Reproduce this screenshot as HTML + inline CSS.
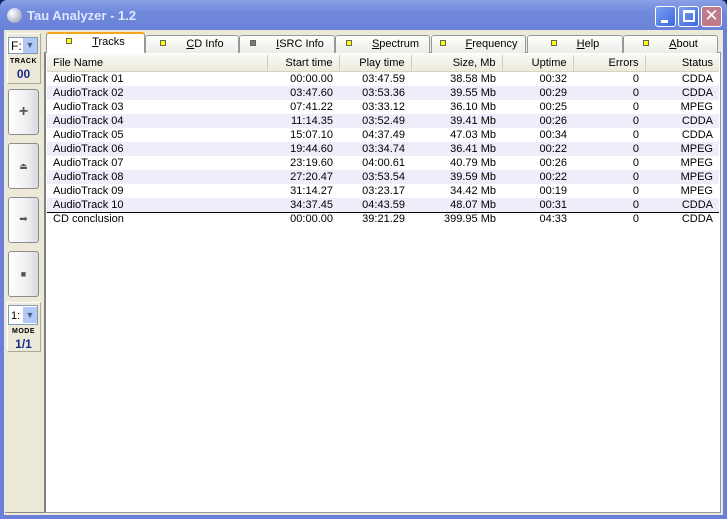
<!DOCTYPE html><html><head><style>
*{margin:0;padding:0;box-sizing:border-box}
body{width:727px;height:519px;overflow:hidden;font-family:Tahoma,"Liberation Sans",sans-serif;font-size:11px;background:#0a246a;position:relative}
.a{position:absolute}
#title{left:0;top:0;width:727px;height:30px;background:linear-gradient(#8aa0e6,#7089dc 40%,#6a82d8);border-radius:7px 7px 0 0}
#frame{left:0;top:28px;width:727px;height:491px;background:#6b7fd9}
#client{left:4px;top:30px;width:719px;height:485px;background:#ece9d8}
.wb{top:6px;width:21px;height:21px;border:1px solid #fff;border-radius:3px;background:linear-gradient(135deg,#7a9ef0,#3b6ae0)}
.tab{top:35px;height:18px;border:1px solid #919b9c;border-bottom:none;border-radius:3px 3px 0 0;background:linear-gradient(#fff,#ecebe5);text-align:center;line-height:16px;color:#000}
.sq{display:inline-block;width:6px;height:6px;background:#ff0;border:1px solid #666;margin-right:20px;vertical-align:1px}
.btn{left:8px;width:31px;height:46px;border:1px solid #8c8c8c;border-radius:3px;background:linear-gradient(90deg,#fff,#f0eff0 60%,#d8d8e2);text-align:center;color:#555}
table{border-collapse:collapse;font-size:11px}
td{height:14px;padding:0 6px;white-space:nowrap;text-align:right}
td:first-child{text-align:left}
</style></head><body>
<div id="frame" class="a"></div>
<div id="title" class="a"></div>
<div class="a" style="left:7px;top:8px;width:15px;height:15px;border-radius:50%;background:radial-gradient(circle at 35% 35%,#fff,#b9bccf 60%,#888)"></div>
<div class="a" style="left:27px;top:8px;color:#dfe6ff;font-weight:bold;font-size:13px;font-family:'Liberation Sans',sans-serif">Tau Analyzer - 1.2</div>
<div class="a wb" style="left:655px"><div class="a" style="left:5px;top:13px;width:7px;height:3px;background:#fff"></div></div>
<div class="a wb" style="left:678px"><div class="a" style="left:4px;top:3px;width:12px;height:12px;border:2px solid #fff;border-top-width:3px"></div></div>
<div class="a wb" style="left:701px;background:#c07a8a;color:#fff;font-size:17px;line-height:18px;text-align:center">✕</div>
<div id="client" class="a"></div>
<!-- left panel -->
<div class="a" style="left:7px;top:33px;width:34px;height:51px;border:1px solid #fff;border-right-color:#aca899;border-bottom-color:#aca899"></div>
<div class="a" style="left:8px;top:37px;width:30px;height:17px;background:#fff;border:1px solid #7f9db9"></div>
<div class="a" style="left:11px;top:39px;font-size:12px">F:</div>
<div class="a" style="left:23px;top:38px;width:14px;height:15px;background:#b4c8f6;color:#4d6185;font-size:9px;text-align:center;line-height:15px">▼</div>
<div class="a" style="left:8px;top:58px;width:31px;text-align:center;font-size:7px;font-weight:bold;letter-spacing:.5px">TRACK</div>
<div class="a" style="left:8px;top:67px;width:31px;text-align:center;font-size:12px;font-weight:bold;color:#1a2c8a">00</div>
<div class="a btn" style="top:89px;font-size:16px;line-height:44px;font-weight:bold">+</div>
<div class="a btn" style="top:143px;font-size:9px;line-height:44px">⏏</div>
<div class="a btn" style="top:197px;font-size:10px;line-height:44px">➡</div>
<div class="a btn" style="top:251px;font-size:9px;line-height:44px">■</div>
<div class="a" style="left:7px;top:302px;width:34px;height:50px;border:1px solid #fff;border-right-color:#aca899;border-bottom-color:#aca899"></div>
<div class="a" style="left:8px;top:305px;width:30px;height:20px;background:#fff;border:1px solid #7f9db9"></div>
<div class="a" style="left:11px;top:310px;font-size:11px">1:</div>
<div class="a" style="left:23px;top:307px;width:14px;height:16px;background:#b4c8f6;color:#4d6185;font-size:9px;text-align:center;line-height:16px">▼</div>
<div class="a" style="left:8px;top:328px;width:31px;text-align:center;font-size:7px;font-weight:bold;letter-spacing:.5px">MODE</div>
<div class="a" style="left:8px;top:337px;width:31px;text-align:center;font-size:12px;font-weight:bold;color:#1a2c8a">1/1</div>
<div class="a" style="left:5px;top:512px;width:40px;height:1px;background:#888"></div>
<!-- content -->
<div class="a" style="left:44px;top:52px;width:677px;height:461px;border:1px solid #919b9c;border-left:2px solid #808080;background:#fff"></div>
<div class="a tab" style="left:145px;width:94px"><span class="sq"></span><u>C</u>D Info</div>
<div class="a tab" style="left:239px;width:96px"><span class="sq" style="background:#777"></span><u>I</u>SRC Info</div>
<div class="a tab" style="left:335px;width:95px"><span class="sq"></span><u>S</u>pectrum</div>
<div class="a tab" style="left:431px;width:95px"><span class="sq"></span><u>F</u>requency</div>
<div class="a tab" style="left:527px;width:96px"><span class="sq"></span><u>H</u>elp</div>
<div class="a tab" style="left:623px;width:95px"><span class="sq"></span><u>A</u>bout</div>
<div class="a tab" style="left:46px;top:32px;height:21px;width:99px;background:#fff;border-top:2px solid #f5a623;line-height:17px"><span class="sq"></span><u>T</u>racks</div>
<div class="a" style="left:47px;top:54px;width:672px;height:18px;background:linear-gradient(#fafaf7,#ebeadb);border-bottom:1px solid #d6d3c4"></div>
<table class="a" style="left:47px;top:55px;width:672px">
<tr style="height:16px"><td style="width:220px">File Name</td><td style="width:72px;border-left:1px solid #ccc">Start time</td><td style="width:72px;border-left:1px solid #ccc">Play time</td><td style="width:91px;border-left:1px solid #ccc">Size, Mb</td><td style="width:71px;border-left:1px solid #ccc">Uptime</td><td style="width:72px;border-left:1px solid #ccc">Errors</td><td style="border-left:1px solid #ccc">Status</td></tr>
</table>
<table class="a" style="left:47px;top:72px;width:672px">
<colgroup><col style="width:220px"><col style="width:72px"><col style="width:72px"><col style="width:91px"><col style="width:71px"><col style="width:72px"><col></colgroup>
<tr><td>AudioTrack 01</td><td>00:00.00</td><td>03:47.59</td><td>38.58 Mb</td><td>00:32</td><td>0</td><td>CDDA</td></tr>
<tr style="background:#eeeefa"><td>AudioTrack 02</td><td>03:47.60</td><td>03:53.36</td><td>39.55 Mb</td><td>00:29</td><td>0</td><td>CDDA</td></tr>
<tr><td>AudioTrack 03</td><td>07:41.22</td><td>03:33.12</td><td>36.10 Mb</td><td>00:25</td><td>0</td><td>MPEG</td></tr>
<tr style="background:#eeeefa"><td>AudioTrack 04</td><td>11:14.35</td><td>03:52.49</td><td>39.41 Mb</td><td>00:26</td><td>0</td><td>CDDA</td></tr>
<tr><td>AudioTrack 05</td><td>15:07.10</td><td>04:37.49</td><td>47.03 Mb</td><td>00:34</td><td>0</td><td>CDDA</td></tr>
<tr style="background:#eeeefa"><td>AudioTrack 06</td><td>19:44.60</td><td>03:34.74</td><td>36.41 Mb</td><td>00:22</td><td>0</td><td>MPEG</td></tr>
<tr><td>AudioTrack 07</td><td>23:19.60</td><td>04:00.61</td><td>40.79 Mb</td><td>00:26</td><td>0</td><td>MPEG</td></tr>
<tr style="background:#eeeefa"><td>AudioTrack 08</td><td>27:20.47</td><td>03:53.54</td><td>39.59 Mb</td><td>00:22</td><td>0</td><td>MPEG</td></tr>
<tr><td>AudioTrack 09</td><td>31:14.27</td><td>03:23.17</td><td>34.42 Mb</td><td>00:19</td><td>0</td><td>MPEG</td></tr>
<tr style="background:#eeeefa;border-bottom:1px solid #000"><td>AudioTrack 10</td><td>34:37.45</td><td>04:43.59</td><td>48.07 Mb</td><td>00:31</td><td>0</td><td>CDDA</td></tr>
<tr><td>CD conclusion</td><td>00:00.00</td><td>39:21.29</td><td>399.95 Mb</td><td>04:33</td><td>0</td><td>CDDA</td></tr>
</table>
</body></html>
